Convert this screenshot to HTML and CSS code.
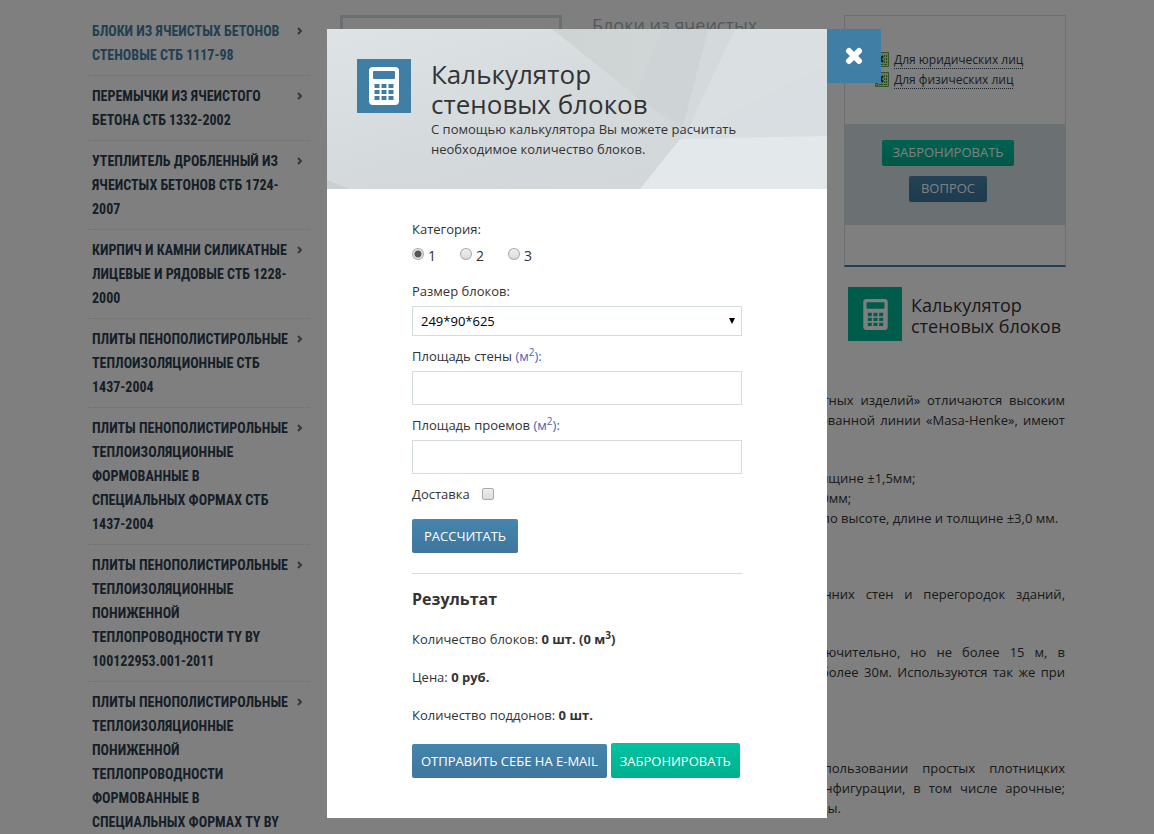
FILE: index.html
```html
<!DOCTYPE html>
<html lang="ru">
<head>
    <meta charset="UTF-8">
    <meta name="viewport" content="width=device-width, initial-scale=1.0">
    <title>Калькулятор стеновых блоков</title>
    <link rel="stylesheet" href="styles.css">
</head>
<body>
    <svg class="sprite" aria-hidden="true">
        <symbol id="icon-calc" viewBox="0 0 30 38">
            <path fill="currentColor" fill-rule="evenodd" d="M4 0h22a4 4 0 0 1 4 4v30a4 4 0 0 1-4 4H4a4 4 0 0 1-4-4V4a4 4 0 0 1 4-4zM5 4a1 1 0 0 0-1 1v6a1 1 0 0 0 1 1h20a1 1 0 0 0 1-1V5a1 1 0 0 0-1-1zM5.500 17v4h5v-4zM12.500 17v4h5v-4zM19.500 17v4h5v-4zM5.500 23v4h5v-4zM12.500 23v4h5v-4zM19.500 23v4h5v-4zM5.500 29v4h5v-4zM12.500 29v4h5v-4zM19.500 29v4h5v-4z"/>
        </symbol>
        <symbol id="icon-arrow" viewBox="0 0 6 8">
            <path fill="none" stroke="currentColor" stroke-width="2" d="M1 1l3 3-3 3"/>
        </symbol>
        <symbol id="icon-excel" viewBox="0 0 16 16">
            <path fill="#d9ecd0" stroke="#6aa84f" d="M3.500 .5h11v14h-11z"/>
            <path fill="#4f9a3c" d="M10 3h1v2h-1zM12 3h1v2h-1zM10 6h1v2h-1zM12 6h1v2h-1zM10 9h1v2h-1zM12 9h1v2h-1zM5 12h4v1H5zM10 12h3v1h-3z"/>
            <path fill="#c5e3b5" stroke="#6aa84f" d="M1.500 11.500h2v3h-2z"/>
            <path fill="none" stroke="#12400f" stroke-width="2" d="M4 4l5 6M9 4l-5 6"/>
        </symbol>
    </svg>

    <div class="page">
        <nav class="menu">
            <a href="#" class="active"><span>Блоки из ячеистых бетонов<br>стеновые СТБ 1117-98</span><svg><use href="#icon-arrow"/></svg></a>
            <a href="#"><span>Перемычки из ячеистого<br>бетона СТБ 1332-2002</span><svg><use href="#icon-arrow"/></svg></a>
            <a href="#"><span>Утеплитель дробленный из<br>ячеистых бетонов СТБ 1724-<br>2007</span><svg><use href="#icon-arrow"/></svg></a>
            <a href="#"><span>Кирпич и камни силикатные<br>лицевые и рядовые СТБ 1228-<br>2000</span><svg><use href="#icon-arrow"/></svg></a>
            <a href="#"><span>Плиты пенополистирольные<br>теплоизоляционные СТБ<br>1437-2004</span><svg><use href="#icon-arrow"/></svg></a>
            <a href="#"><span>Плиты пенополистирольные<br>теплоизоляционные<br>формованные в<br>специальных формах СТБ<br>1437-2004</span><svg><use href="#icon-arrow"/></svg></a>
            <a href="#"><span>Плиты пенополистирольные<br>теплоизоляционные<br>пониженной<br>теплопроводности TY BY<br>100122953.001-2011</span><svg><use href="#icon-arrow"/></svg></a>
            <a href="#"><span>Плиты пенополистирольные<br>теплоизоляционные<br>пониженной<br>теплопроводности<br>формованные в<br>специальных формах TY BY</span><svg><use href="#icon-arrow"/></svg></a>
        </nav>

        <main class="content">
            <div class="product">
                <div class="gallery"></div>
                <h1>Блоки из ячеистых бетонов</h1>
                <aside>
                    <div class="price-card">
                        <div class="price-files">
                            <div class="file"><svg><use href="#icon-excel"/></svg><a href="#">Для юридических лиц</a></div>
                            <div class="file"><svg><use href="#icon-excel"/></svg><a href="#">Для физических лиц</a></div>
                        </div>
                        <div class="price-actions">
                            <button type="button" class="btn btn-small btn-green">Забронировать</button>
                            <button type="button" class="btn btn-small btn-question">Вопрос</button>
                        </div>
                    </div>
                    <a href="#calc" class="calc-link">
                        <span class="calc-icon"><svg><use href="#icon-calc"/></svg></span>
                        <span class="calc-text">Калькулятор стеновых блоков</span>
                    </a>
                </aside>
            </div>

            <div class="description">
                <p class="full">
                    <span>Стеновые блоки производства нашего нового комбината «Завод цементных изделий» отличаются высоким</span>
                    <span>качеством. Блоки изготавливаются на единой современной автоматизированной линии «Masa-Henke», имеют</span>
                </p>
                <p>
                    Отклонения размеров:<br>
                    категория 1 – по высоте ±1,0мм, а также по длине и по общей расчетной толщине ±1,5мм;<br>
                    категория 2 – по высоте, по длине, толщине и диагоналям не более чем ±2,0мм;<br>
                    категория 3 – для кладки на растворе, отклонения размеров наших блоков по высоте, длине и толщине ±3,0 мм.
                </p>
                <p>Применение:</p>
                <p class="full">
                    <span>Стеновые блоки применяются для кладки всех наружных и внутренних стен и перегородок зданий,</span>
                    <span class="last">в том числе жилых.</span>
                </p>
                <p class="full">
                    <span>Высота возводимого бетонного здания принята до пяти этажей включительно, но не более 15 м, в</span>
                    <span>заполнении многочисленных проемов в каркасных зданиях высотой не более 30м. Используются так же при</span>
                </p>
                <p>Преимущества:</p>
                <p class="full">
                    <span class="last">Простота обработки:</span>
                    <span>стеновые блоки очень легко и быстро обрабатываются при использовании простых плотницких</span>
                    <span>инструментов, что позволяет выполнять проем практически любой конфигурации, в том числе арочные;</span>
                    <span class="last">материалы экологически чистые и не оказывают вреда для природной среды.</span>
                </p>
            </div>
        </main>
    </div>

    <div class="overlay">
        <div class="modal" role="dialog" aria-labelledby="calc-title">
            <button type="button" class="modal-close" aria-label="Закрыть">
                <svg viewBox="0 0 18 18"><path stroke="#fff" stroke-width="6" stroke-linecap="round" d="M4 4l10 10M14 4L4 14"/></svg>
            </button>
            <header class="modal-header">
                <svg class="modal-bg" viewBox="0 0 500 160" preserveAspectRatio="none" aria-hidden="true">
                    <defs>
                        <linearGradient id="base" x1="0" y1="0" x2="1" y2="1">
                            <stop offset="0" stop-color="#dee4e6"/>
                            <stop offset=".5" stop-color="#d4dadc"/>
                            <stop offset="1" stop-color="#d0d6d9"/>
                        </linearGradient>
                        <linearGradient id="fold" x1="0" y1="0" x2="1" y2="0">
                            <stop offset="0" stop-color="#ced3d4"/>
                            <stop offset=".4" stop-color="#cfd5d4"/>
                            <stop offset="1" stop-color="#d2d8da"/>
                        </linearGradient>
                    </defs>
                    <path fill="url(#base)" d="M0 0h500v160H0z"/>
                    <path fill="url(#fold)" d="M225 0h156l-23 99-5 11-18-22z"/>
                    <path fill="#ced4d6" d="M335 0h46l-23 99-50-31z"/>
                    <path fill="#d4dadc" d="M381 0h27l-46 98-9 12z"/>
                    <path fill="#dadfe2" d="M408 0h92v107l-147 3 9-12z"/>
                    <path fill="#d8dee1" d="M500 36v71l-147 3z"/>
                    <path fill="#e3e9eb" d="M353 110l-40 50h187v-53z"/>
                    <path fill="#c9cfd2" d="M0 151l22 9H0z"/>
                </svg>
                <span class="calc-icon"><svg><use href="#icon-calc"/></svg></span>
                <div>
                    <h2 id="calc-title">Калькулятор<br>стеновых блоков</h2>
                    <p>С помощью калькулятора Вы можете расчитать необходимое количество блоков.</p>
                </div>
            </header>

            <form class="calc-form">
                <fieldset>
                    <legend>Категория:</legend>
                    <div class="radios">
                        <label><input type="radio" name="category" value="1" checked>1</label>
                        <label><input type="radio" name="category" value="2">2</label>
                        <label><input type="radio" name="category" value="3">3</label>
                    </div>
                </fieldset>
                <div class="field">
                    <label for="size">Размер блоков:</label>
                    <div class="select">
                        <select id="size" name="size">
                            <option>249*90*625</option>
                        </select>
                    </div>
                </div>
                <div class="field">
                    <label for="wall">Площадь стены <span class="unit">(м<sup>2</sup>):</span></label>
                    <input type="text" id="wall" name="wall">
                </div>
                <div class="field">
                    <label for="openings">Площадь проемов <span class="unit">(м<sup>2</sup>):</span></label>
                    <input type="text" id="openings" name="openings">
                </div>
                <div class="delivery">
                    <label for="delivery">Доставка</label>
                    <input type="checkbox" id="delivery" name="delivery">
                </div>
                <button type="button" class="btn btn-calc">Рассчитать</button>

                <div class="result">
                    <h3>Результат</h3>
                    <p>Количество блоков: <b>0 шт. (0 м<sup>3</sup>)</b></p>
                    <p>Цена: <b>0 руб.</b></p>
                    <p>Количество поддонов: <b>0 шт.</b></p>
                    <div class="result-actions">
                        <button type="button" class="btn">Отправить себе на e-mail</button>
                        <button type="button" class="btn btn-green">Забронировать</button>
                    </div>
                </div>
            </form>
        </div>
    </div>
</body>
</html>
```
FILE: styles.css
```css
* {
    box-sizing: border-box;
}
body {
    margin: 0;
    height: 100vh;
    overflow: hidden;
    background: #fff;
    color: #333;
    font: 13px/20px "Open Sans", sans-serif;
}
h1, h2, h3, p {
    margin: 0;
    font-weight: normal;
}
sup {
    font-size: 10px;
    line-height: 0;
}
input, select, button {
    font: inherit;
    margin: 0;
}
.sprite {
    display: none;
}

/* page */
.page {
    display: grid;
    grid-template-columns: 222px 1fr;
    gap: 30px;
    max-width: 978px;
    margin: 0 auto;
}
.menu {
    padding-top: 11px;
}
.menu a {
    display: flex;
    justify-content: space-between;
    align-items: flex-start;
    padding: 8px 7px 8px 4px;
    border-bottom: 1px dotted #d7dfe4;
    color: #2c3e50;
    font: bold 14px/24px "Roboto Condensed", "Liberation Sans Narrow", Roboto, sans-serif;
    text-transform: uppercase;
    text-decoration: none;
    white-space: nowrap;
}
.menu a.active {
    color: #417ea5;
}
.menu svg {
    flex: none;
    width: 6px;
    height: 8px;
    margin-top: 8px;
    color: #60717f;
}
.product {
    display: grid;
    grid-template-columns: repeat(3, 1fr);
    gap: 30px;
    padding-top: 15px;
}
.gallery {
    border: 3px solid #d7dfe4;
}
.product h1 {
    color: #a9b0b6;
    font-size: 18px;
    line-height: 21px;
}
.price-card {
    border: 1px solid #d7dfe4;
    border-bottom: 2px solid #417ea5;
    padding-bottom: 40px;
}
.price-files {
    height: 108px;
    padding: 34px 0 0 29px;
    font-size: 12px;
}
.file {
    display: flex;
    align-items: center;
    gap: 4px;
    height: 20px;
}
.file svg {
    width: 16px;
    height: 16px;
}
.file a {
    color: #2c3e50;
    line-height: 16px;
    text-decoration: none;
    border-bottom: 1px dotted #2c3e50;
}
.price-actions {
    display: flex;
    flex-direction: column;
    align-items: center;
    gap: 10px;
    padding: 16px 14px 23px 0;
    background: #d7e0e6;
}
.calc-link {
    display: flex;
    align-items: center;
    gap: 9px;
    margin: 20px 0 0 4px;
    color: #333;
    font-size: 18px;
    line-height: 21px;
    text-decoration: none;
}
.calc-text {
    padding-top: 4px;
}
.calc-icon {
    display: flex;
    flex: none;
    align-items: center;
    justify-content: center;
    width: 54px;
    height: 54px;
    background: #417ea5;
    color: #fff;
}
.calc-icon svg {
    width: 30px;
    height: 38px;
}
.calc-link .calc-icon {
    background: #00b894;
}
.calc-link .calc-icon svg {
    width: 25px;
    height: 31px;
}
.description {
    padding: 49px 1px 0 0;
}
.description p {
    margin-bottom: 18px;
    white-space: nowrap;
}
.description .full span {
    display: block;
    text-align-last: justify;
}
.description .full .last {
    text-align-last: left;
}

/* buttons */
.btn {
    height: 34px;
    padding: 0 9px;
    border: 0;
    border-radius: 2px;
    background: linear-gradient(#4585ae, #3f769c);
    color: #fff;
    text-transform: uppercase;
    cursor: pointer;
}
.btn-green {
    background: linear-gradient(#00c3a0, #00b090);
}
.btn-small {
    height: 26px;
    padding: 0 10px 2px;
}
.btn-question {
    padding: 0 12px 2px;
}
.btn-calc {
    padding: 0 12px;
}

/* modal */
.overlay {
    position: fixed;
    inset: 0;
    padding-top: 29px;
    background: rgba(0, 0, 0, 0.5);
}
.modal {
    position: relative;
    max-width: 500px;
    margin: 0 auto;
    background: #fff;
}
.modal-close {
    position: absolute;
    top: 0;
    left: 100%;
    display: flex;
    align-items: center;
    justify-content: center;
    width: 54px;
    height: 54px;
    padding: 0;
    border: 0;
    background: #417ea5;
    cursor: pointer;
}
.modal-close svg {
    width: 18px;
    height: 18px;
}
.modal-header {
    position: relative;
    display: flex;
    gap: 20px;
    padding: 30px;
}
.modal-header > * {
    position: relative;
}
.modal-header .modal-bg {
    position: absolute;
    top: 0;
    left: 0;
    width: 100%;
    height: 100%;
}
.modal-header h2 {
    font-size: 26px;
    line-height: 30px;
}
.calc-form {
    padding: 30px 85px 40px;
}
fieldset {
    margin: 0 0 16px;
    padding: 0;
    border: 0;
}
legend {
    padding: 0;
}
.radios {
    display: flex;
    gap: 24px;
    padding-top: 8px;
}
.radios label {
    display: flex;
    align-items: flex-start;
    gap: 4px;
    width: 24px;
    font-size: 14px;
    line-height: 18px;
}
input[type="radio"],
input[type="checkbox"] {
    appearance: none;
    width: 12px;
    height: 12px;
    border: 1px solid #aaa;
    border-radius: 2px;
    background: linear-gradient(#eee, #dcdcdc);
}
input[type="radio"] {
    margin-top: 1px;
    border-radius: 50%;
}
input[type="radio"]:checked {
    background: radial-gradient(circle, #555 3px, #e6e6e6 4px);
}
.field {
    margin-bottom: 10px;
}
.field label {
    display: block;
    margin-bottom: 5px;
}
.unit {
    color: #4564b4;
}
.field input,
.field select {
    display: block;
    width: 100%;
    height: 34px;
    padding: 0 8px;
    border: 1px solid #d5dcdf;
    border-radius: 0;
    background: #fff;
}
.select {
    position: relative;
}
.field select {
    appearance: none;
    height: 30px;
    color: #000;
}
.select::after {
    content: "";
    position: absolute;
    top: 12px;
    right: 7px;
    width: 6px;
    height: 6px;
    background: #000;
    clip-path: polygon(0 0, 100% 0, 50% 100%);
    pointer-events: none;
}
.delivery {
    display: flex;
    align-items: center;
    gap: 12px;
    margin-bottom: 15px;
}
.result {
    margin-top: 20px;
    padding-top: 15px;
    border-top: 1px solid #d5dcdf;
}
.result h3 {
    margin-bottom: 20px;
    font-size: 16px;
    font-weight: bold;
}
.result p {
    margin-bottom: 18px;
}
.result-actions {
    display: flex;
    align-items: flex-end;
    gap: 4px;
}
.result-actions .btn-green {
    height: 35px;
}
```
